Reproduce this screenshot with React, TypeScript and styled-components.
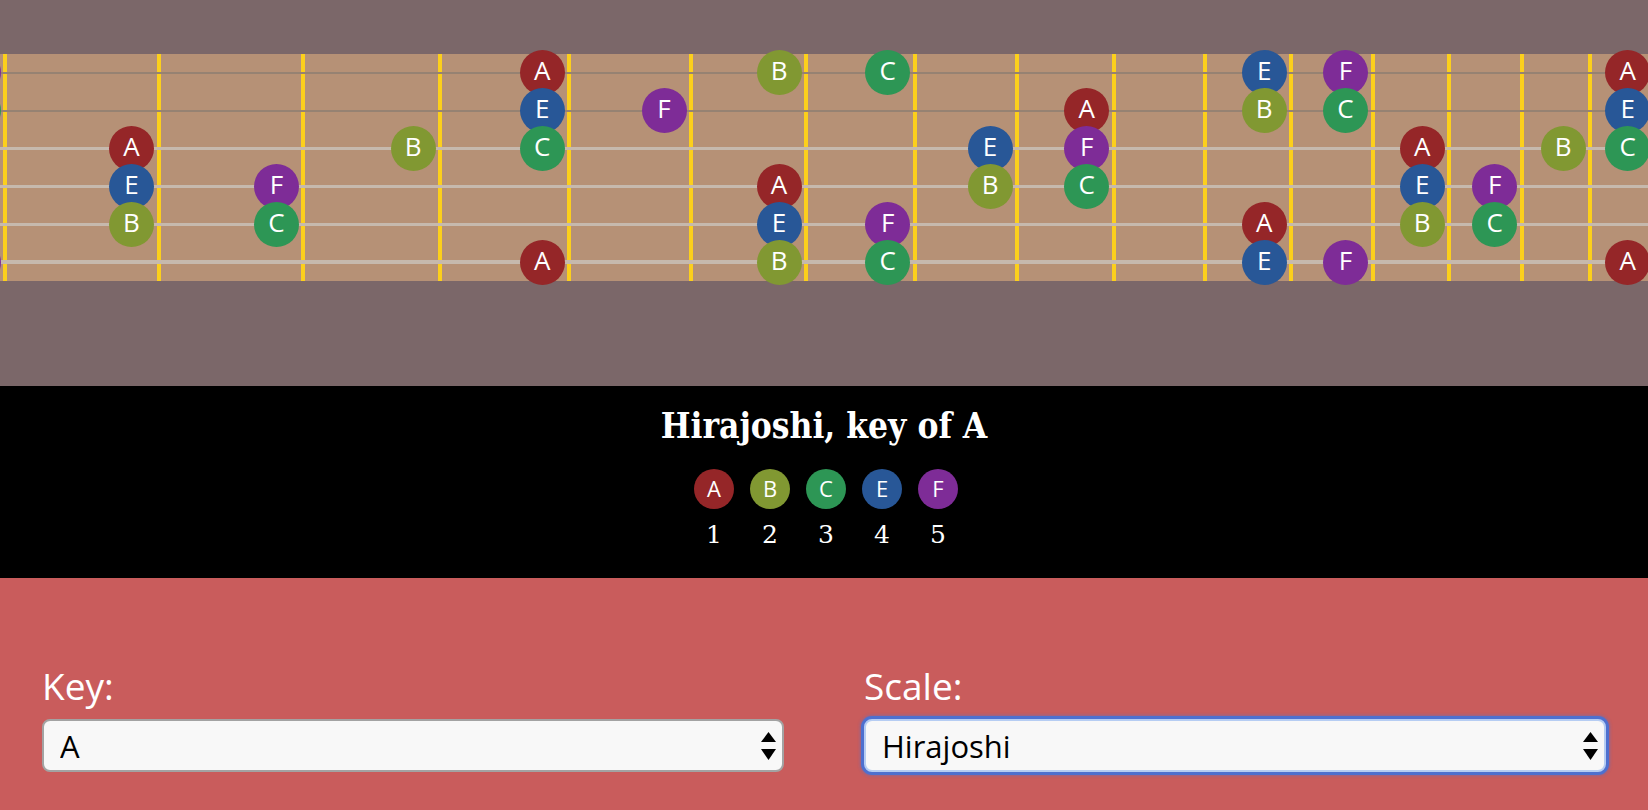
import React from 'react';
import styled, { createGlobalStyle } from 'styled-components';

const GlobalStyle = createGlobalStyle`
  body {
    margin: 0;
    padding: 0;
    background: #c95c5c;
    font-family: 'Open Sans', 'DejaVu Sans', sans-serif;
  }
`;

const NOTE_NAMES = ['C', 'C#', 'D', 'D#', 'E', 'F', 'F#', 'G', 'G#', 'A', 'A#', 'B'];

// Hirajoshi in A, one colour per degree
const SCALE = [
  { name: 'A', color: '#952628' },
  { name: 'B', color: '#819832' },
  { name: 'C', color: '#2d9655' },
  { name: 'E', color: '#285797' },
  { name: 'F', color: '#7e2c97' },
];

// top (high) string first
const TUNING = ['F', 'C', 'G#', 'D#', 'A#', 'F'];
const FRET_COUNT = 16;
const NUT_X = 5;
const SCALE_LENGTH = 2735;
const NOTE_SIZE = 45;

const fretX = (n: number) => NUT_X + SCALE_LENGTH * (1 - Math.pow(2, -n / 12));

const Neck = styled.section`
  background: #7b6769;
  padding: 54px 0 105px;
  overflow: hidden;
`;

const Board = styled.div`
  position: relative;
  height: 227px;
  background: #b69176;
  display: flex;
  flex-direction: column;
`;

const Fret = styled.div`
  position: absolute;
  top: 0;
  bottom: 0;
  width: 4px;
  background: #fccf1c;
`;

const StringRow = styled.div`
  position: relative;
  flex: 1;
  display: flex;
  align-items: center;
`;

const StringLine = styled.div<{ $thick: number; $color: string }>`
  width: 100%;
  height: ${({ $thick }) => $thick}px;
  background: ${({ $color }) => $color};
`;

const Note = styled.div<{ $color: string }>`
  position: absolute;
  top: 50%;
  width: ${NOTE_SIZE}px;
  height: ${NOTE_SIZE}px;
  margin-top: -${NOTE_SIZE / 2}px;
  border-radius: 50%;
  background: ${({ $color }) => $color};
  color: #fff;
  font-size: 26px;
  line-height: 41px;
  text-align: center;
`;

const Summary = styled.section`
  background: #000;
  color: #fff;
  padding: 19px 0 29px;
  display: flex;
  flex-direction: column;
  align-items: center;
`;

const Title = styled.h1`
  margin: 0;
  font-family: 'DejaVu Serif Condensed', 'DejaVu Serif', serif;
  font-stretch: condensed;
  font-weight: bold;
  font-size: 35px;
  line-height: normal;
`;

const Legend = styled.div`
  display: flex;
  gap: 16px;
  margin: 23px 0 0 4px;
`;

const Degree = styled.div`
  display: flex;
  flex-direction: column;
  align-items: center;
  gap: 11px;
`;

const Swatch = styled.div<{ $color: string }>`
  width: 40px;
  height: 40px;
  border-radius: 50%;
  background: ${({ $color }) => $color};
  font-size: 22px;
  line-height: 39px;
  text-align: center;
`;

const DegreeNumber = styled.span`
  font-family: 'DejaVu Serif', serif;
  font-size: 25px;
  font-weight: 300;
  line-height: normal;
`;

const Controls = styled.form`
  display: grid;
  grid-template-columns: 1fr 1fr;
  gap: 80px;
  padding: 82px 42px 60px;
`;

const Field = styled.label`
  display: flex;
  flex-direction: column;
  gap: 8px;
`;

const FieldLabel = styled.span`
  color: #fff;
  font-size: 37px;
  line-height: normal;
`;

const SelectWrap = styled.div`
  position: relative;
`;

const Select = styled.select<{ $focused?: boolean }>`
  appearance: none;
  -webkit-appearance: none;
  width: 100%;
  height: 53px;
  box-sizing: border-box;
  padding: 0 40px 0 16px;
  border-radius: 8px;
  background: #f8f8f8;
  color: #000;
  font-family: 'Open Sans', sans-serif;
  font-size: 31px;
  outline: none;
  border: 2px solid ${({ $focused }) => ($focused ? '#b6cdf3' : '#a3a3a3')};
  box-shadow: ${({ $focused }) =>
    $focused ? '0 0 0 3px #4e70cf, 0 0 3px 4px rgba(78, 112, 207, 0.45)' : 'none'};
`;

const Arrows = styled.svg`
  position: absolute;
  right: 8px;
  top: 50%;
  margin-top: -14px;
  pointer-events: none;
`;

const SelectArrows = () => (
  <Arrows width="15" height="28" viewBox="0 0 15 28">
    <polygon points="7.5,0 15,10 0,10" fill="#000" />
    <polygon points="0,17 15,17 7.5,28" fill="#000" />
  </Arrows>
);

const scaleColor = (note: string) => SCALE.find((s) => s.name === note)?.color;

const App: React.FC = () => {
  const frets = Array.from({ length: FRET_COUNT + 1 }, (_, n) => fretX(n));

  return (
    <>
      <GlobalStyle />
      <Neck>
        <Board>
          {frets.map((x, n) => (
            <Fret key={n} style={{ left: x - 2 }} />
          ))}
          {TUNING.map((open, i) => {
            const start = NOTE_NAMES.indexOf(open);
            return (
              <StringRow key={i}>
                <StringLine $thick={i < 2 ? 2 : i === 5 ? 4 : 3} $color={i < 2 ? '#968272' : '#c6b9ad'} />
                {frets.map((x, n) => {
                  const note = NOTE_NAMES[(start + n) % 12];
                  const color = scaleColor(note);
                  if (!color) return null;
                  return (
                    <Note key={n} $color={color} style={{ left: x - 27 - NOTE_SIZE / 2 }}>
                      {note}
                    </Note>
                  );
                })}
              </StringRow>
            );
          })}
        </Board>
      </Neck>

      <Summary>
        <Title>Hirajoshi, key of A</Title>
        <Legend>
          {SCALE.map((s, i) => (
            <Degree key={s.name}>
              <Swatch $color={s.color}>{s.name}</Swatch>
              <DegreeNumber>{i + 1}</DegreeNumber>
            </Degree>
          ))}
        </Legend>
      </Summary>

      <Controls onSubmit={(e) => e.preventDefault()}>
        <Field>
          <FieldLabel>Key:</FieldLabel>
          <SelectWrap>
            <Select defaultValue="A">
              {NOTE_NAMES.map((n) => (
                <option key={n}>{n}</option>
              ))}
            </Select>
            <SelectArrows />
          </SelectWrap>
        </Field>
        <Field>
          <FieldLabel>Scale:</FieldLabel>
          <SelectWrap>
            <Select $focused defaultValue="Hirajoshi">
              <option>Major</option>
              <option>Natural Minor</option>
              <option>Harmonic Minor</option>
              <option>Pentatonic Major</option>
              <option>Pentatonic Minor</option>
              <option>Blues</option>
              <option>Hirajoshi</option>
              <option>In Sen</option>
            </Select>
            <SelectArrows />
          </SelectWrap>
        </Field>
      </Controls>
    </>
  );
};

export default App;
